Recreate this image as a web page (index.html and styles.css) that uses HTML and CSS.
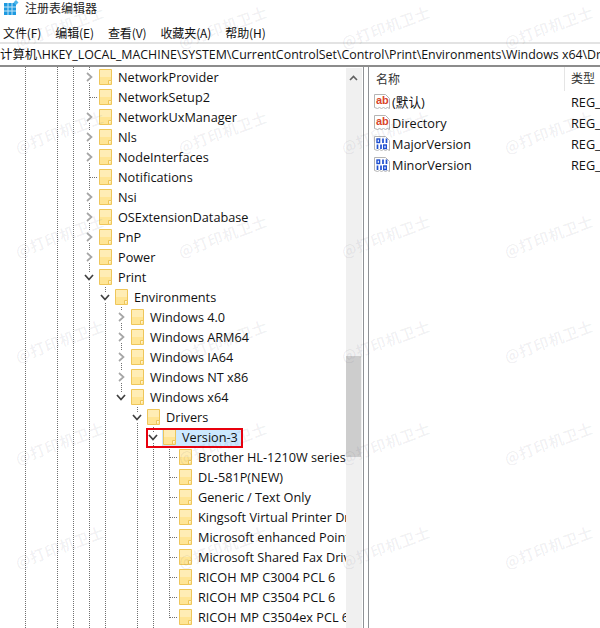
FILE: index.html
```html
<!DOCTYPE html>
<html lang="zh">
<head>
<meta charset="utf-8">
<title>注册表编辑器</title>
<link rel="stylesheet" href="styles.css">
</head>
<body>
<div class="app">
  <header class="titlebar">
    <svg class="appicon" width="15" height="15" viewBox="0 0 15 15"><rect x="0" y="3" width="12" height="12" fill="#1e9ae0"/><path d="M0 7h12M0 11h12M4 3v12M8 3v12" stroke="#bfe3f7" stroke-width="1"/><path d="M12 0l2.500 2.500L12 5 9.500 2.500z" fill="#4fb6ea"/></svg>
    <span>注册表编辑器</span>
  </header>
  <nav class="menubar">
    <span>文件(F)</span><span>编辑(E)</span><span>查看(V)</span><span>收藏夹(A)</span><span>帮助(H)</span>
  </nav>
  <div class="address">计算机\HKEY_LOCAL_MACHINE\SYSTEM\CurrentControlSet\Control\Print\Environments\Windows x64\Drivers\Version-3</div>
  <main class="panes">
    <section class="tree" id="tree"></section>
    <div class="scrollbar"><svg class="up" width="9" height="6" viewBox="0 0 9 6"><path d="M1 5l3.500-3.500L8 5" fill="none" stroke="#606060" stroke-width="1.600"/></svg><div class="thumb"></div></div>
    <div class="splitter"></div>
    <section class="list">
      <div class="head"><span class="cname">名称</span><span class="ctype">类型</span></div>
      <div class="row"><svg class="ric" width="16" height="16" viewBox="0 0 16 16"><path d="M.5.500h11l4 4v10l-2-1-2 1-2-1-2 1-2-1-2 1-3-1z" fill="#fff" stroke="#b5b5b5"/><text x="2" y="10" class="ab">ab</text></svg><span class="cname">(默认)</span><span class="ctype">REG_SZ</span></div>
      <div class="row"><svg class="ric" width="16" height="16" viewBox="0 0 16 16"><path d="M.5.500h11l4 4v10l-2-1-2 1-2-1-2 1-2-1-2 1-3-1z" fill="#fff" stroke="#b5b5b5"/><text x="2" y="10" class="ab">ab</text></svg><span class="cname">Directory</span><span class="ctype">REG_SZ</span></div>
      <div class="row"><svg class="ric" width="16" height="16" viewBox="0 0 16 16"><path d="M.5.500h11l4 4v10l-2-1-2 1-2-1-2 1-2-1-2 1-3-1z" fill="#fff" stroke="#b5b5b5"/><path d="M9 2.500v4.500M12.500 2.500v4.500M3.500 8.500v4.500M7 8.500v4.500" stroke="#1f4fd0" stroke-width="1.700"/><rect x="3" y="3" width="2.600" height="3.500" fill="none" stroke="#1f4fd0" stroke-width="1.400"/><rect x="9.700" y="9" width="2.600" height="3.500" fill="none" stroke="#1f4fd0" stroke-width="1.400"/></svg><span class="cname">MajorVersion</span><span class="ctype">REG_DWORD</span></div>
      <div class="row"><svg class="ric" width="16" height="16" viewBox="0 0 16 16"><path d="M.5.500h11l4 4v10l-2-1-2 1-2-1-2 1-2-1-2 1-3-1z" fill="#fff" stroke="#b5b5b5"/><path d="M9 2.500v4.500M12.500 2.500v4.500M3.500 8.500v4.500M7 8.500v4.500" stroke="#1f4fd0" stroke-width="1.700"/><rect x="3" y="3" width="2.600" height="3.500" fill="none" stroke="#1f4fd0" stroke-width="1.400"/><rect x="9.700" y="9" width="2.600" height="3.500" fill="none" stroke="#1f4fd0" stroke-width="1.400"/></svg><span class="cname">MinorVersion</span><span class="ctype">REG_DWORD</span></div>
    </section>
  </main>
  <div class="watermarks" id="marks" aria-hidden="true"></div>
</div>
<script src="app.js"></script>
</body>
</html>
```
FILE: styles.css
```css
* { box-sizing: border-box; }
html, body { margin: 0; padding: 0; background: #fff; }
body { width: 600px; height: 628px; overflow: hidden; font-family: "Noto Sans CJK SC", "Noto Sans", sans-serif; color: #000; }
.app { position: relative; width: 600px; height: 628px; overflow: hidden; display: flex; flex-direction: column; }
.titlebar { height: 23px; display: flex; align-items: flex-start; gap: 6px; padding-left: 4px; font-size: 12px; line-height: 16px; color: #222; }
.appicon { flex: none; margin-top: 0; }
.menubar { height: 19px; display: flex; gap: 14px; padding-left: 3px; font-size: 12px; line-height: 20px; color: #111; }
.menubar span { letter-spacing: -.1px; }
.address { height: 25px; border-top: 2px solid #e3e3e3; border-bottom: 2px solid #8c8c8c; font-family: "Open Sans", "Noto Sans CJK SC", sans-serif; font-size: 12.400px; line-height: 21px; white-space: nowrap; overflow: hidden; background: #fff; color: #111; }
.panes { flex: 1; display: flex; min-height: 0; }
.tree { width: 346px; flex: none; overflow: hidden; position: relative; font-family: "Open Sans", "Noto Sans CJK SC", sans-serif; font-size: 12.700px; }
.node { height: 20px; display: flex; align-items: center; white-space: nowrap; position: relative; }
.node .label { margin-left: 6px; line-height: 20px; color: #111; }
.folder { flex: none; }
.twist { flex: none; width: 16px; height: 20px; margin-right: 2px; display: flex; align-items: center; justify-content: center; position: relative; z-index: 2; }
.twist svg { background: #fff; box-sizing: content-box; padding: 1px; }
.sel { position: absolute; left: 162px; width: 79px; top: 2px; height: 18px; background: #cce8ff; z-index: 0; }
.node > svg, .node > .label { position: relative; z-index: 2; }
.selbox { position: absolute; left: 146px; width: 97px; top: 1px; height: 20px; border: 2px solid #e8000d; z-index: 3; }
.vline { position: absolute; width: 1px; border-left: 1px dotted #707070; z-index: 1; }
.hline { position: absolute; width: 8px; height: 1px; border-top: 1px dotted #707070; top: 10px; z-index: 1; }
.scrollbar { width: 16px; flex: none; background: #f0f0f0; position: relative; margin-top: 1px; }
.up { position: absolute; left: 3px; top: 7px; }
.thumb { position: absolute; left: 0; top: 288px; width: 15px; height: 101px; background: #cdcdcd; }
.splitter { width: 6px; flex: none; margin-left: 1px; background: #fff; border-left: 1px solid #8f9296; border-right: 1px solid #8f9296; }
.list { flex: 1; min-width: 0; overflow: hidden; font-family: "Open Sans", "Noto Sans CJK SC", sans-serif; font-size: 12.700px; color: #111; }
.head { height: 24px; display: flex; align-items: center; padding-left: 7px; font-size: 12px; }
.head .cname { width: 188px; flex: none; color: #333; }
.head .ctype { color: #333; border-left: 1px solid #e5e5e5; padding-left: 6px; height: 24px; line-height: 24px; }
.row { height: 21px; display: flex; align-items: center; padding-left: 5px; white-space: nowrap; }
.ric { flex: none; margin-right: 2px; }
.row .cname { width: 179px; flex: none; }
.row .ctype { flex: none; }
.ab { font: bold 11px "Liberation Sans", sans-serif; fill: #d9452b; }
.watermarks { position: absolute; inset: 0; pointer-events: none; z-index: 5; }
.mark { position: absolute; font-family: "Noto Sans CJK SC", sans-serif; font-size: 15px; font-weight: 500; letter-spacing: .6px; line-height: 22px; color: rgba(60,60,90,.085); transform: rotate(-20deg); transform-origin: 0 50%; white-space: nowrap; }
```
FILE: app.js
```js
const rows = [
  [5,'c','NetworkProvider'],[5,'','NetworkSetup2'],[5,'c','NetworkUxManager'],[5,'c','Nls'],[5,'c','NodeInterfaces'],[5,'','Notifications'],[5,'c','Nsi'],[5,'c','OSExtensionDatabase'],[5,'c','PnP'],[5,'c','Power'],[5,'o','Print'],
  [6,'o','Environments'],[7,'c','Windows 4.0'],[7,'c','Windows ARM64'],[7,'c','Windows IA64'],[7,'c','Windows NT x86'],[7,'o','Windows x64'],[8,'o','Drivers'],[9,'s','Version-3'],
  [10,'','Brother HL-1210W series'],[10,'','DL-581P(NEW)'],[10,'','Generic / Text Only'],[10,'','Kingsoft Virtual Printer Driver'],[10,'','Microsoft enhanced Point and Print'],[10,'','Microsoft Shared Fax Driver'],[10,'','RICOH MP C3004 PCL 6'],[10,'','RICOH MP C3504 PCL 6'],[10,'','RICOH MP C3504ex PCL 6']
];
const folder = '<svg class="folder" width="13" height="16" viewBox="0 0 13 16"><path d="M.5.500h12v15H.5z" fill="#ffe595" stroke="#eec65a"/><path d="M1 1h11v7H1z" fill="#ffedb5"/><path d="M9.500 15.500v-4h3" fill="#fff3cf" stroke="#eec65a"/></svg>';
const closed = '<svg width="7" height="10" viewBox="0 0 7 10"><path d="M1 1l4.500 4L1 9" fill="none" stroke="#a6a6a6" stroke-width="1.700"/></svg>';
const open = '<svg width="10" height="7" viewBox="0 0 10 7"><path d="M1 1l4 4.500L9 1" fill="none" stroke="#404040" stroke-width="1.700"/></svg>';
const tree = document.getElementById('tree');
rows.forEach(([lvl, st, name]) => {
  const n = document.createElement('div');
  n.className = 'node';
  n.style.paddingLeft = (lvl * 16 + 1) + 'px';
  const tw = st === 'c' ? closed : (st === 'o' || st === 's') ? open : '';
  n.innerHTML = `<span class="twist">${tw}</span>${folder}<span class="label">${name}</span>`;
  if (st === '') {
    const h = document.createElement('div');
    h.className = 'hline';
    h.style.left = (lvl * 16 + 9) + 'px';
    n.appendChild(h);
  }
  if (st === 's') {
    const h = document.createElement('div');
    h.className = 'sel';
    n.prepend(h);
    const b = document.createElement('div');
    b.className = 'selbox';
    n.appendChild(b);
  }
  tree.appendChild(n);
});
[[25,0,561],[57,0,561],[73,0,561],[89,0,561],[105,220,561],[121,240,331],[137,340,561],[153,360,561],[169,380,551]].forEach(([x, top, bottom]) => {
  const v = document.createElement('div');
  v.className = 'vline';
  v.style.left = x + 'px'; v.style.top = top + 'px'; v.style.height = (bottom - top) + 'px';
  tree.appendChild(v);
});
const marks = document.getElementById('marks');
[16,179,342,505].forEach(x => [32,137,241,346,448,552].forEach(y => {
  const m = document.createElement('div');
  m.className = 'mark';
  m.textContent = '@打印机卫士';
  m.style.left = x + 'px'; m.style.top = y + 'px';
  marks.appendChild(m);
}));
```
